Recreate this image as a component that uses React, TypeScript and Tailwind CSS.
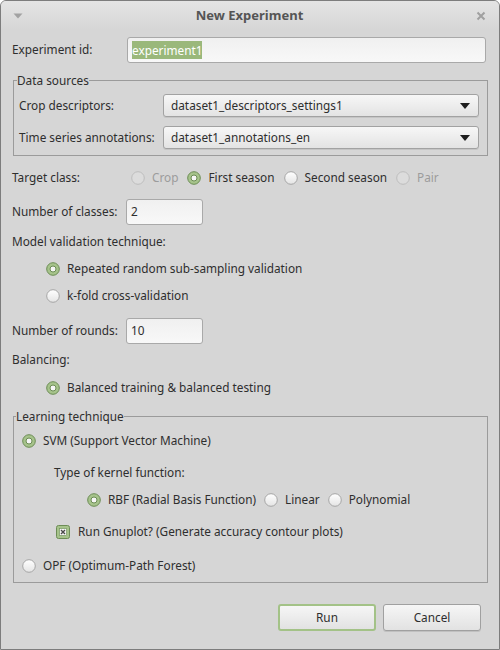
import React from "react";

const font = { fontFamily: '"Noto Sans", "Open Sans", sans-serif' };

const Radio = ({ checked = false, disabled = false }: { checked?: boolean; disabled?: boolean }) => (
  <svg width="14" height="14" viewBox="0 0 14 14" className="shrink-0">
    <defs>
      <linearGradient id="rg" x1="0" y1="0" x2="0" y2="1">
        <stop offset="0" stopColor="#ffffff" />
        <stop offset="1" stopColor="#e4e4e4" />
      </linearGradient>
    </defs>
    {checked ? (
      <>
        <circle cx="7" cy="7" r="6.3" fill="#a6c38b" stroke="#6c8c55" strokeWidth="1" />
        <circle cx="7" cy="7" r="3" fill="#f6f6f6" stroke="#6c8c55" strokeWidth="1" />
      </>
    ) : disabled ? (
      <circle cx="7" cy="7" r="6.3" fill="#dcdcdc" stroke="#bdbdbd" strokeWidth="1" />
    ) : (
      <circle cx="7" cy="7" r="6.3" fill="url(#rg)" stroke="#a5a5a5" strokeWidth="1" />
    )}
  </svg>
);

const Check = () => (
  <svg width="14" height="14" viewBox="0 0 14 14" className="shrink-0">
    <rect x="0.5" y="0.5" width="13" height="13" rx="2" fill="#a6c38b" stroke="#6c8c55" />
    <rect x="3.5" y="3.5" width="7" height="7" fill="#f6f6f6" stroke="#6c8c55" strokeWidth="0.6" />
    <path d="M5 5 L9 9 M9 5 L5 9" stroke="#4a4a4a" strokeWidth="1.4" />
  </svg>
);

const Option = ({
  label,
  checked,
  disabled,
}: {
  label: string;
  checked?: boolean;
  disabled?: boolean;
}) => (
  <div className="flex items-center">
    <Radio checked={checked} disabled={disabled} />
    <span className={`ml-[7px] ${disabled ? "text-[#9c9c9c]" : ""}`}>{label}</span>
  </div>
);

const Select = ({ value }: { value: string }) => (
  <div className="w-[316px] h-[23px] flex items-center justify-between pl-[7px] pr-[8px] rounded-[3px] border border-[#a2a2a2] bg-gradient-to-b from-[#f7f7f7] to-[#e3e3e3] shadow-[0_1px_0_rgba(0,0,0,0.08)]">
    <span>{value}</span>
    <svg width="10" height="6" viewBox="0 0 10 6">
      <path d="M0 0 H10 L5 6 Z" fill="#1e1e1e" />
    </svg>
  </div>
);

const TextBox = ({ value, width, selected }: { value: string; width: string; selected?: boolean }) => (
  <div
    className={`${width} h-[26px] flex items-center pl-[4px] rounded-[3px] border border-[#a9a9a9] bg-gradient-to-b from-[#f0f0f0] to-[#f8f8f8]`}
  >
    {selected ? (
      <span className="bg-[#9ab87b] text-white leading-[18px]">{value}</span>
    ) : (
      <span>{value}</span>
    )}
  </div>
);

export default function App() {
  return (
    <div
      style={font}
      className="w-[500px] h-[650px] bg-[#d6d6d6] border border-[#7d7d7d] rounded-t-[6px] overflow-hidden flex flex-col text-[11.8px] text-[#2e2e2e]"
    >
      {/* Title bar */}
      <div className="h-[29px] shrink-0 flex items-center justify-between px-[12px] bg-gradient-to-b from-[#e4e4e4] to-[#d6d6d6]">
        <svg width="10" height="6" viewBox="0 0 10 6">
          <path d="M0.5 0.5 H9.5 L5 5.5 Z" fill="#a2a2a2" />
        </svg>
        <span className="font-bold text-[13px] text-[#555555]">New Experiment</span>
        <svg width="10" height="10" viewBox="0 0 10 10" className="mr-[1px]">
          <path d="M1.5 1.5 L8.5 8.5 M8.5 1.5 L1.5 8.5" stroke="#a0a0a0" strokeWidth="2" />
        </svg>
      </div>

      <div className="px-[11px] flex flex-col">
        {/* Experiment id */}
        <div className="mt-[7px] flex items-center">
          <span className="w-[115px]">Experiment id:</span>
          <TextBox value="experiment1" width="w-[359px]" selected />
        </div>

        {/* Data sources */}
        <fieldset className="mt-[9px] ml-[1px] w-[475px] border border-[#9b9b9b] pl-[5px] pb-[6px]">
          <legend className="ml-[-2px] leading-[16px]">Data sources</legend>
          <div className="mt-[6px] flex items-center">
            <span className="w-[144px]">Crop descriptors:</span>
            <Select value="dataset1_descriptors_settings1" />
          </div>
          <div className="mt-[9px] flex items-center">
            <span className="w-[144px]">Time series annotations:</span>
            <Select value="dataset1_annotations_en" />
          </div>
        </fieldset>

        {/* Target class */}
        <div className="mt-[12px] h-[20px] flex items-center">
          <span className="w-[119px]">Target class:</span>
          <div className="flex items-center gap-[9px]">
            <Option label="Crop" disabled />
            <Option label="First season" checked />
            <Option label="Second season" />
            <Option label="Pair" disabled />
          </div>
        </div>

        {/* Number of classes */}
        <div className="mt-[11px] flex items-center">
          <span className="w-[114px]">Number of classes:</span>
          <TextBox value="2" width="w-[77px]" />
        </div>

        <div className="mt-[7px] h-[20px] flex items-center">Model validation technique:</div>
        <div className="mt-[7px] h-[20px] flex items-center pl-[34px]">
          <Option label="Repeated random sub-sampling validation" checked />
        </div>
        <div className="mt-[7px] h-[20px] flex items-center pl-[34px]">
          <Option label="k-fold cross-validation" />
        </div>

        {/* Number of rounds */}
        <div className="mt-[12px] flex items-center">
          <span className="w-[114px]">Number of rounds:</span>
          <TextBox value="10" width="w-[77px]" />
        </div>

        <div className="mt-[6px] h-[20px] flex items-center">Balancing:</div>
        <div className="mt-[8px] h-[20px] flex items-center pl-[34px]">
          <Option label="Balanced training & balanced testing" checked />
        </div>

        {/* Learning technique */}
        <fieldset className="mt-[10px] ml-[1px] w-[475px] border border-[#9b9b9b] pb-[6px]">
          <legend className="ml-[2px] leading-[16px]">Learning technique</legend>
          <div className="mt-[7px] h-[20px] flex items-center pl-[8px]">
            <Option label="SVM (Support Vector Machine)" checked />
          </div>
          <div className="mt-[12px] h-[20px] flex items-center pl-[40px]">Type of kernel function:</div>
          <div className="mt-[7px] h-[20px] flex items-center pl-[73px] gap-[8px]">
            <Option label="RBF (Radial Basis Function)" checked />
            <Option label="Linear" />
            <Option label="Polynomial" />
          </div>
          <div className="mt-[12px] h-[20px] flex items-center pl-[42px]">
            <Check />
            <span className="ml-[8px]">Run Gnuplot? (Generate accuracy contour plots)</span>
          </div>
          <div className="mt-[14px] h-[20px] flex items-center pl-[8px]">
            <Option label="OPF (Optimum-Path Forest)" />
          </div>
        </fieldset>

        {/* Buttons */}
        <div className="mt-[21px] flex justify-end gap-[7px] pr-[7px]">
          <button className="w-[98px] h-[27px] rounded-[3px] border-2 border-[#a3c287] bg-gradient-to-b from-[#f6f6f6] to-[#e2e2e2]">
            Run
          </button>
          <button className="w-[98px] h-[27px] rounded-[3px] border border-[#a0a0a0] bg-gradient-to-b from-[#f6f6f6] to-[#e2e2e2] shadow-[0_1px_0_rgba(0,0,0,0.1)]">
            Cancel
          </button>
        </div>
      </div>
    </div>
  );
}
